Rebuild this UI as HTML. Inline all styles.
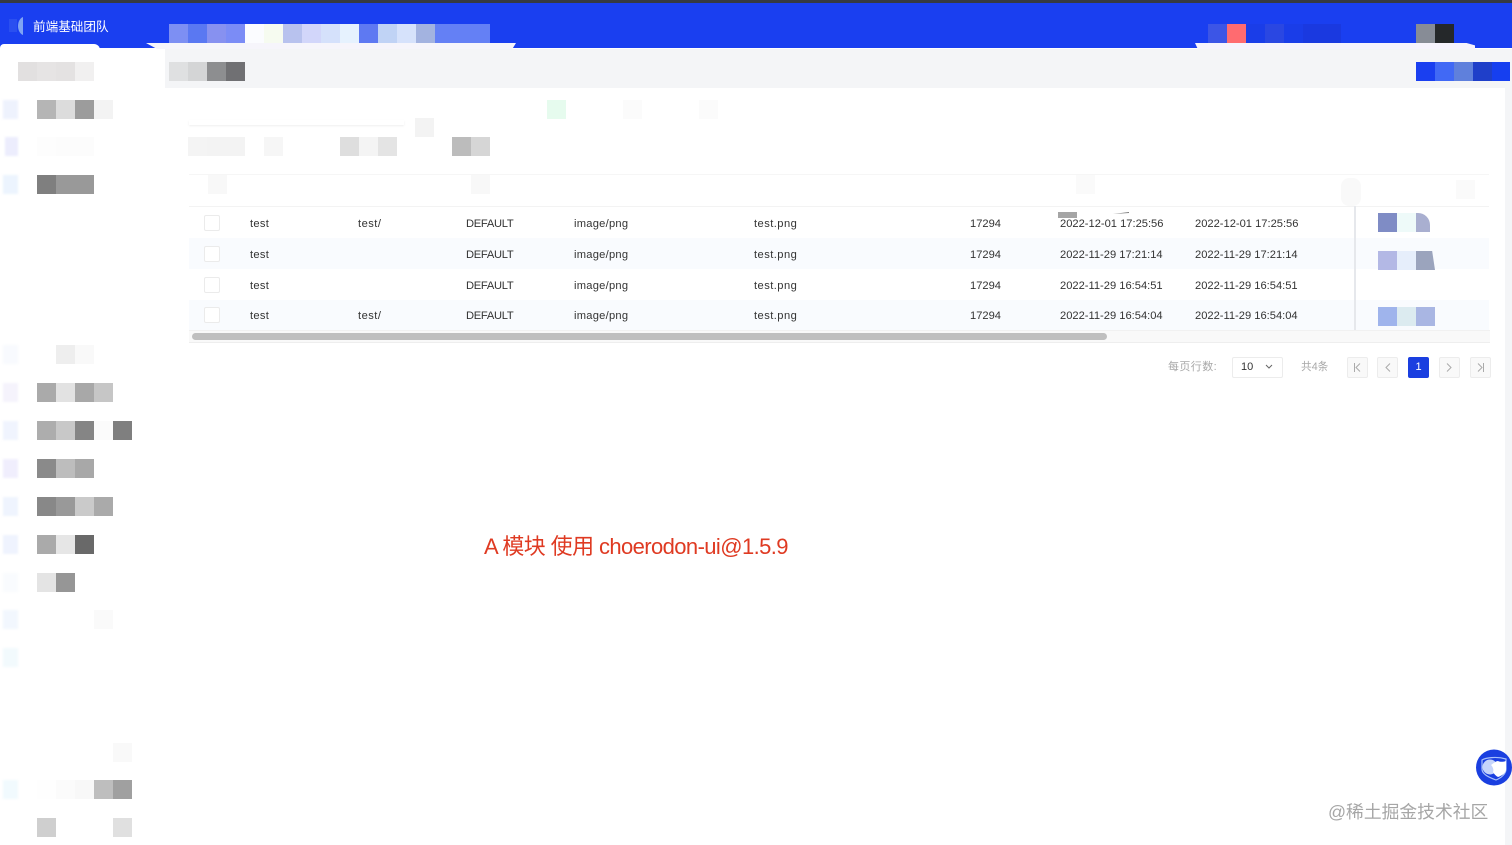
<!DOCTYPE html>
<html lang="zh">
<head>
<meta charset="utf-8">
<title>前端基础团队</title>
<style>
html,body{margin:0;padding:0;width:1512px;height:845px;overflow:hidden;background:#fff;font-family:"Liberation Sans","Noto Sans CJK SC",sans-serif}
div,span,svg{position:absolute}
#w{left:0;top:0;width:1512px;height:845px;overflow:hidden;filter:blur(.35px)}
.m{display:flex;height:19px}
.m i{display:block;width:19px;height:19px;flex:none}
.t{font-size:11.15px;line-height:14px;color:#333;white-space:nowrap}
.a{letter-spacing:.3px}
.c{letter-spacing:.45px}
.d{letter-spacing:-.28px}
.e{letter-spacing:.25px}
.f{letter-spacing:.48px}
.cb{left:204px;width:14px;height:14px;border:1px solid #ebebeb;border-radius:2px;background:#fff}
.b{top:357px;width:19px;height:19px;border:1px solid #ececec;border-radius:2px;background:#f9f9f9}
.s{left:3px;width:15px;height:19px;filter:blur(1px)}
</style>
</head>
<body>
<div id="w">
<!-- header -->
<div style="left:0;top:0;width:1512px;height:3px;background:#363a42"></div>
<div style="left:0;top:3px;width:1512px;height:45px;background:#1a3ff0"></div>
<div style="left:0;top:44px;width:100px;height:6px;background:#fff;border-radius:8px 12px 0 0"></div>
<div style="left:146px;top:43px;width:370px;height:6px;background:#f6f5fb;clip-path:polygon(0 0,100% 0,99% 100%,3% 100%)"></div>
<div style="left:1195px;top:43px;width:280px;height:6px;background:#f6f3fd;clip-path:polygon(0 0,97% 0,100% 40%,100% 100%,1% 100%)"></div>
<svg style="left:8px;top:15px" width="18" height="22" viewBox="0 0 18 22"><path d="M1 4h8v13H1z" fill="#2a4ff0"/><path d="M15 2v18c-3-1-5-5-5-9s2-8 5-9z" fill="#7fa3f4"/></svg>
<div style="left:33px;top:19px;font-size:12.6px;line-height:17px;color:#fff;white-space:nowrap">前端基础团队</div>
<div class="m" style="left:169px;top:24px"><i style="background:#7d8ff3"></i><i style="background:#5a78f2"></i><i style="background:#8791f0"></i><i style="background:#7b8cf6"></i><i style="background:#fbfcff"></i><i style="background:#f6fbf0"></i><i style="background:#b8c2ee"></i><i style="background:#d2d6fa"></i><i style="background:#d5e1fb"></i><i style="background:#e6f2fe"></i><i style="background:#5e79f2"></i><i style="background:#c0d3f5"></i><i style="background:#d6e2fb"></i><i style="background:#a3b3e0"></i><i style="background:#6480f5"></i><i style="background:#6480f5"></i><i style="background:#6480f5;width:17px"></i></div>
<div class="m" style="left:1208px;top:24px"><i style="background:#3c55e6"></i><i style="background:#ff6b70"></i><i style="background:#1a3de8"></i><i style="background:#2a47e2"></i><i style="background:#1a3de8"></i><i style="background:#1a39e0"></i><i style="background:#1a39e0"></i></div>
<div class="m" style="left:1416px;top:24px"><i style="background:#878c96"></i><i style="background:#25282a"></i></div>

<!-- sub bar -->
<div style="left:165px;top:49px;width:1347px;height:39px;background:#f4f5f7"></div>
<div style="left:1505px;top:88px;width:7px;height:757px;background:#f4f5f7"></div>
<div class="m" style="left:18px;top:62px"><i style="background:#e2e0e0"></i><i style="background:#e6e4e4"></i><i style="background:#e4e2e2"></i><i style="background:#f1f0f0"></i></div>
<div class="m" style="left:169px;top:62px"><i style="background:#dfe0e1"></i><i style="background:#d4d5d6"></i><i style="background:#8d8e90"></i><i style="background:#707073"></i></div>
<div class="m" style="left:1416px;top:62px"><i style="background:#1a3ff0"></i><i style="background:#4169f5"></i><i style="background:#5f80dc"></i><i style="background:#1f3fc9"></i><i style="background:#163ff0;width:18px"></i></div>

<!-- sidebar icons -->
<div class="s" style="top:100px;background:#eef2fd"></div>
<div class="s" style="top:137px;background:#ecedfd;left:5px;width:13px"></div>
<div class="s" style="top:175px;background:#ecf4fe"></div>
<div class="s" style="top:345px;background:#f8fafe"></div>
<div class="s" style="top:383px;background:#f5f3fc"></div>
<div class="s" style="top:421px;background:#f0f4fe"></div>
<div class="s" style="top:459px;background:#f0eefd"></div>
<div class="s" style="top:497px;background:#eff4fe"></div>
<div class="s" style="top:535px;background:#eff3fe"></div>
<div class="s" style="top:573px;background:#f9fbfe"></div>
<div class="s" style="top:610px;background:#f2f7fe"></div>
<div class="s" style="top:648px;background:#f2fafd"></div>
<div class="s" style="top:780px;background:#f1fafe"></div>

<!-- sidebar labels -->
<div class="m" style="left:37px;top:100px"><i style="background:#b5b5b5"></i><i style="background:#dcdcdc"></i><i style="background:#9c9c9c"></i><i style="background:#f3f3f3"></i></div>
<div class="m" style="left:37px;top:137px"><i style="background:#fdfdfd"></i><i style="background:#fcfcfc"></i><i style="background:#fcfcfc"></i></div>
<div class="m" style="left:37px;top:175px"><i style="background:#7f7f7f"></i><i style="background:#999"></i><i style="background:#999"></i></div>
<div class="m" style="left:56px;top:345px"><i style="background:#eee"></i><i style="background:#f9f9f9"></i></div>
<div class="m" style="left:37px;top:383px"><i style="background:#aaa"></i><i style="background:#e2e2e2"></i><i style="background:#a8a8a8"></i><i style="background:#c6c6c6"></i></div>
<div class="m" style="left:37px;top:421px"><i style="background:#adadad"></i><i style="background:#c8c8c8"></i><i style="background:#858585"></i><i style="background:#fbfbfb"></i><i style="background:#7f7f7f"></i></div>
<div class="m" style="left:37px;top:459px"><i style="background:#8a8a8a"></i><i style="background:#bdbdbd"></i><i style="background:#a8a8a8"></i></div>
<div class="m" style="left:37px;top:497px"><i style="background:#888"></i><i style="background:#999"></i><i style="background:#cacaca"></i><i style="background:#aaa"></i></div>
<div class="m" style="left:37px;top:535px"><i style="background:#aaa"></i><i style="background:#e6e6e6"></i><i style="background:#696969"></i></div>
<div class="m" style="left:37px;top:573px"><i style="background:#e4e4e4"></i><i style="background:#969696"></i></div>
<div class="m" style="left:94px;top:610px"><i style="background:#fafafa"></i></div>
<div class="m" style="left:113px;top:743px"><i style="background:#f9f9f9"></i></div>
<div class="m" style="left:37px;top:780px"><i style="background:#fefefe"></i><i style="background:#fbfbfb"></i><i style="background:#f8f8f8"></i><i style="background:#bebebe"></i><i style="background:#a0a0a0"></i></div>
<div class="m" style="left:37px;top:818px"><i style="background:#cfcfcf"></i></div>
<div class="m" style="left:113px;top:818px"><i style="background:#e0e0e0"></i></div>

<!-- filter area -->
<div class="m" style="left:547px;top:100px"><i style="background:#e6fbee"></i></div>
<div class="m" style="left:623px;top:100px"><i style="background:#fbfbfb"></i></div>
<div class="m" style="left:699px;top:100px"><i style="background:#fbfbfb"></i></div>
<div class="m" style="left:415px;top:118px"><i style="background:#f3f3f3"></i></div>
<div style="left:189px;top:120px;width:215px;height:5px;background:#fff;box-shadow:0 1px 2px #eee"></div>
<div class="m" style="left:188px;top:137px"><i style="background:#f4f4f4"></i><i style="background:#f3f3f3"></i><i style="background:#f3f3f3"></i><i style="background:#fff"></i><i style="background:#f6f6f6"></i></div>
<div class="m" style="left:340px;top:137px"><i style="background:#dedede"></i><i style="background:#f4f4f4"></i><i style="background:#e4e4e4"></i></div>
<div class="m" style="left:452px;top:137px"><i style="background:#bcbcbc"></i><i style="background:#d6d6d6"></i></div>

<!-- table head -->
<div style="left:189px;top:174px;width:1300px;height:1px;background:#f6f6f6"></div>
<div class="m" style="left:208px;top:175px"><i style="background:#f8f8f8"></i></div>
<div class="m" style="left:471px;top:175px"><i style="background:#f8f8f8"></i></div>
<div class="m" style="left:1076px;top:175px"><i style="background:#fafafa"></i></div>
<div class="m" style="left:1456px;top:180px"><i style="background:#fafafa"></i></div>
<div style="left:189px;top:206px;width:1300px;height:1px;background:#f3f3f3"></div>

<!-- rows -->
<div style="left:189px;top:238px;width:1300px;height:31px;background:#f9fbfe"></div>
<div style="left:189px;top:300px;width:1300px;height:30px;background:#f9fbfe"></div>
<div style="left:1341px;top:178px;width:20px;height:28px;background:#f9f9f9;border-radius:8px"></div>
<div style="left:1354px;top:206px;width:2px;height:124px;background:#e6e8ec"></div>
<div style="left:1058px;top:212px;width:19px;height:6px;background:#a5a5a5"></div>
<div style="left:1113px;top:212px;width:16px;height:2px;background:#777;clip-path:polygon(0 100%,100% 0,100% 50%,0 100%)"></div>

<div class="cb" style="top:215px"></div>
<div class="cb" style="top:246px"></div>
<div class="cb" style="top:277px"></div>
<div class="cb" style="top:307px"></div>

<div class="t a" style="left:250px;top:217px">test</div><div class="t f" style="left:358px;top:217px">test/</div><div class="t d" style="left:466px;top:217px">DEFAULT</div><div class="t e" style="left:574px;top:217px">image/png</div><div class="t c" style="left:754px;top:217px">test.png</div><div class="t" style="left:970px;top:217px">17294</div><div class="t" style="left:1060px;top:217px">2022-12-01 17:25:56</div><div class="t" style="left:1195px;top:217px">2022-12-01 17:25:56</div>
<div class="t a" style="left:250px;top:248px">test</div><div class="t d" style="left:466px;top:248px">DEFAULT</div><div class="t e" style="left:574px;top:248px">image/png</div><div class="t c" style="left:754px;top:248px">test.png</div><div class="t" style="left:970px;top:248px">17294</div><div class="t" style="left:1060px;top:248px">2022-11-29 17:21:14</div><div class="t" style="left:1195px;top:248px">2022-11-29 17:21:14</div>
<div class="t a" style="left:250px;top:279px">test</div><div class="t d" style="left:466px;top:279px">DEFAULT</div><div class="t e" style="left:574px;top:279px">image/png</div><div class="t c" style="left:754px;top:279px">test.png</div><div class="t" style="left:970px;top:279px">17294</div><div class="t" style="left:1060px;top:279px">2022-11-29 16:54:51</div><div class="t" style="left:1195px;top:279px">2022-11-29 16:54:51</div>
<div class="t a" style="left:250px;top:309px">test</div><div class="t f" style="left:358px;top:309px">test/</div><div class="t d" style="left:466px;top:309px">DEFAULT</div><div class="t e" style="left:574px;top:309px">image/png</div><div class="t c" style="left:754px;top:309px">test.png</div><div class="t" style="left:970px;top:309px">17294</div><div class="t" style="left:1060px;top:309px">2022-11-29 16:54:04</div><div class="t" style="left:1195px;top:309px">2022-11-29 16:54:04</div>

<!-- action mosaics -->
<div class="m" style="left:1378px;top:213px"><i style="background:#7f8cc5"></i><i style="background:#eefaf9"></i><i style="background:#a9afd0;width:14px;border-radius:0 12px 0 0"></i></div>
<div class="m" style="left:1378px;top:251px"><i style="background:#b3b8e5"></i><i style="background:#e6eefb"></i><i style="background:#9ba4bd;clip-path:polygon(0 0,85% 0,100% 100%,0 100%)"></i></div>
<div class="m" style="left:1378px;top:307px"><i style="background:#9fb4ec"></i><i style="background:#dcebf0"></i><i style="background:#a9b6e3"></i></div>

<!-- scrollbar -->
<div style="left:189px;top:330px;width:1301px;height:13px;background:#f9f9f9;border-top:1px solid #f1f1f1;border-bottom:1px solid #eee;box-sizing:border-box"></div>
<div style="left:192px;top:333px;width:915px;height:7px;background:#bfbfbf;border-radius:4px"></div>

<!-- pagination -->
<div style="left:1168px;top:360px;font-size:11px;line-height:15px;color:#a8a8a8;white-space:nowrap;letter-spacing:.4px">每页行数:</div>
<div style="left:1232px;top:357px;width:49px;height:19px;border:1px solid #ececec;border-radius:2px;background:#fff"></div>
<div style="left:1241px;top:360px;font-size:11px;line-height:15px;color:#333">10</div>
<svg style="left:1265px;top:364px" width="8" height="6" viewBox="0 0 8 6"><path d="M1 1l3 3 3-3" fill="none" stroke="#666" stroke-width="1"/></svg>
<div style="left:1301px;top:360px;font-size:10.7px;line-height:15px;color:#a8a8a8;white-space:nowrap">共4条</div>
<div class="b" style="left:1347px"></div>
<svg style="left:1353px;top:362px" width="9" height="11" viewBox="0 0 9 11"><path d="M1.5 1v9M7 1.5L3 5.5l4 4" fill="none" stroke="#aaa"/></svg>
<div class="b" style="left:1377px"></div>
<svg style="left:1384px;top:362px" width="8" height="11" viewBox="0 0 8 11"><path d="M6 1.5L2 5.5l4 4" fill="none" stroke="#aaa"/></svg>
<div style="left:1408px;top:357px;width:21px;height:21px;background:#1a3fe0;border-radius:2px;color:#fff;font-size:11px;line-height:21px;text-align:center">1</div>
<div class="b" style="left:1439px"></div>
<svg style="left:1445px;top:362px" width="8" height="11" viewBox="0 0 8 11"><path d="M2 1.5l4 4-4 4" fill="none" stroke="#aaa"/></svg>
<div class="b" style="left:1470px"></div>
<svg style="left:1476px;top:362px" width="9" height="11" viewBox="0 0 9 11"><path d="M7.5 1v9M2 1.5l4 4-4 4" fill="none" stroke="#aaa"/></svg>

<!-- red annotation -->
<div style="left:484px;top:532px;font-size:22px;line-height:29px;color:#df3a22;white-space:nowrap;letter-spacing:-.6px">A 模块 使用 choerodon-ui@1.5.9</div>

<!-- floating button -->
<svg style="left:1476px;top:749px" width="36" height="37" viewBox="0 0 36 37"><circle cx="18" cy="18.5" r="18" fill="#1a3fe0"/><path d="M6 11c3-2 14-4 24-1v10c0 5-5 9-10 11C12 28 6 25 6 20z" fill="none" stroke="#a9c0fa" stroke-width="1.2"/><circle cx="14" cy="18" r="7.5" fill="#c5d4fb"/><path d="M15 16c3-2 5-4 7-4 2 1 5 1 8 0v9c-1 4-5 6-8 7-2-1-4-3-5-5 1-2 0-5-2-7z" fill="#fff"/></svg>

<!-- watermark -->
<div style="left:1328px;top:800px;font-size:17.8px;line-height:24px;color:#a6a6a6;white-space:nowrap">@稀土掘金技术社区</div>
</div>
</body>
</html>
